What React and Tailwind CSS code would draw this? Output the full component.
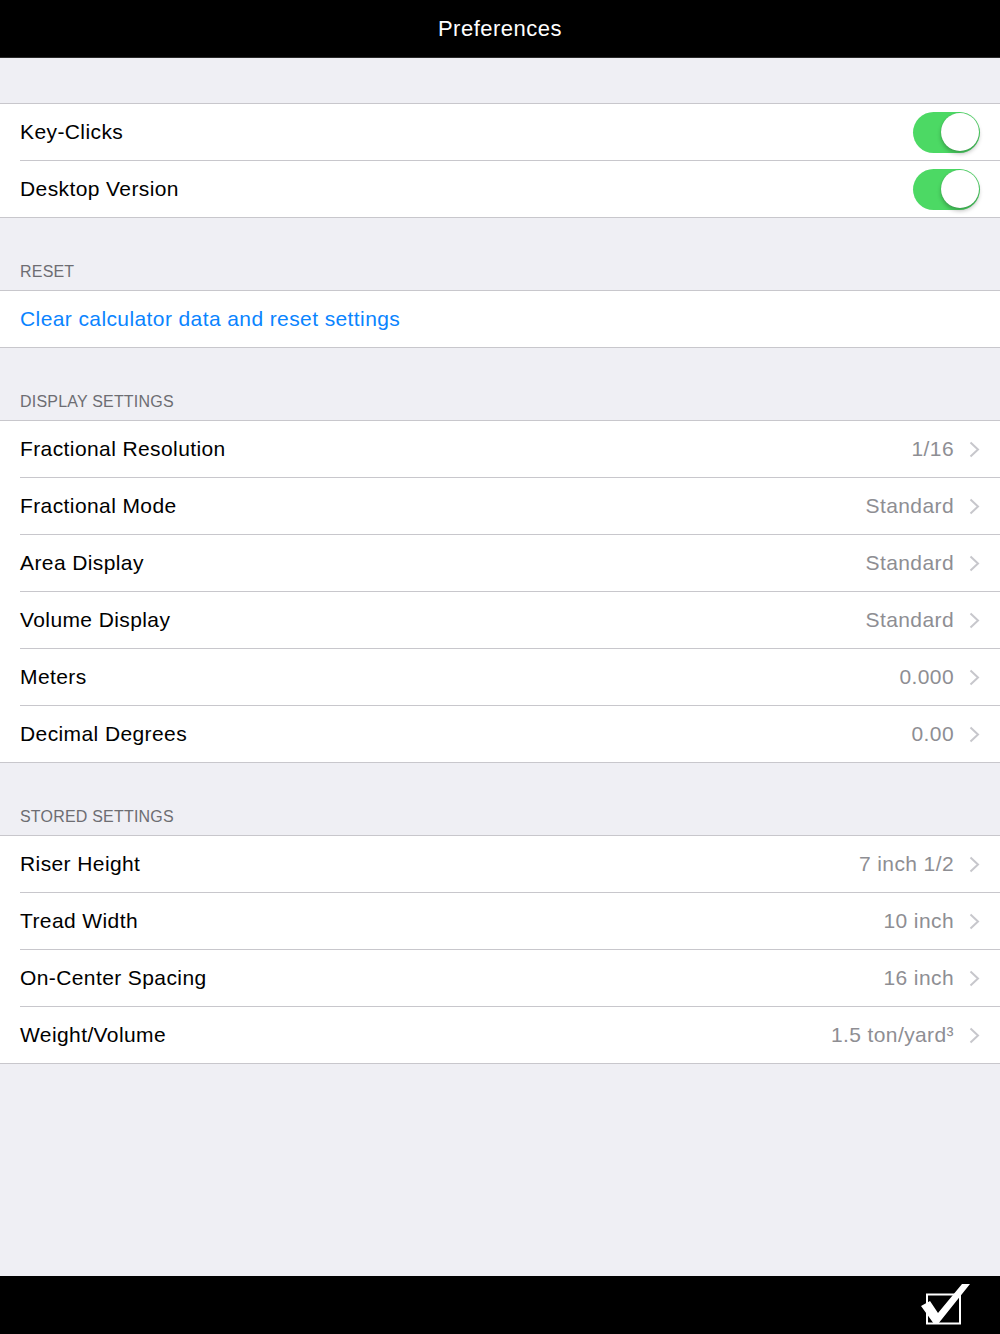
import React, { useState } from 'react';

// iOS-style preferences screen

function Toggle({ on, onChange }) {
  return (
    <button
      type="button"
      onClick={onChange}
      className={`relative w-[67px] h-[41px] rounded-full transition-colors ${on ? 'bg-[#4cd964]' : 'bg-[#e5e5ea]'}`}
    >
      <span
        className={`absolute top-[1.5px] w-[38px] h-[38px] rounded-full bg-white shadow-[0_3px_4px_rgba(0,0,0,0.25),0_0_1px_rgba(0,0,0,0.2)] transition-all ${on ? 'left-[27.5px]' : 'left-[1.5px]'}`}
      />
    </button>
  );
}

function Chevron() {
  return (
    <svg width="11" height="17" viewBox="0 0 11 17" className="shrink-0">
      <path d="M1.5 1.5 L9 8.5 L1.5 15.5" fill="none" stroke="#c7c7cc" strokeWidth="2" />
    </svg>
  );
}

function Row({ label, value, last, children }) {
  return (
    <>
      <div className="h-[56px] flex items-center bg-white pl-5 pr-5">
        <span className="flex-1 text-[21px] tracking-[0.4px] text-black">{label}</span>
        {value !== undefined && (
          <div className="flex items-center gap-[15px]">
            <span className="text-[21px] tracking-[0.4px] text-[#8e8e93]">{value}</span>
            <Chevron />
          </div>
        )}
        {children}
      </div>
      {!last && <div className="ml-5 h-px bg-[#c8c7cc]" />}
    </>
  );
}

function Group({ children }) {
  return <div className="border-t border-b border-[#c8c7cc] bg-white">{children}</div>;
}

function Header({ text }) {
  return (
    <div className="h-[72px] flex items-end px-5 pb-[6px]">
      <span className="text-[16px] uppercase text-[#6d6d72] tracking-[0.2px]">{text}</span>
    </div>
  );
}

export default function App() {
  const [keyClicks, setKeyClicks] = useState(true);
  const [desktop, setDesktop] = useState(true);

  const display = [
    { label: 'Fractional Resolution', value: '1/16' },
    { label: 'Fractional Mode', value: 'Standard' },
    { label: 'Area Display', value: 'Standard' },
    { label: 'Volume Display', value: 'Standard' },
    { label: 'Meters', value: '0.000' },
    { label: 'Decimal Degrees', value: '0.00' },
  ];

  const stored = [
    { label: 'Riser Height', value: '7 inch 1/2' },
    { label: 'Tread Width', value: '10 inch' },
    { label: 'On-Center Spacing', value: '16 inch' },
    { label: 'Weight/Volume', value: '1.5 ton/yard³' },
  ];

  return (
    <div className="min-h-screen flex flex-col bg-[#efeff4] font-['Liberation_Sans',Arial,sans-serif]">
      <div className="h-[58px] shrink-0 bg-black border-b border-[#2a2a2a] flex items-center justify-center">
        <span className="text-white text-[22px] tracking-[0.5px]">Preferences</span>
      </div>

      <div className="h-[45px]" />
      <Group>
        <Row label="Key-Clicks">
          <Toggle on={keyClicks} onChange={() => setKeyClicks(!keyClicks)} />
        </Row>
        <Row label="Desktop Version" last>
          <Toggle on={desktop} onChange={() => setDesktop(!desktop)} />
        </Row>
      </Group>

      <Header text="Reset" />
      <Group>
        <div className="h-[56px] flex items-center px-5">
          <span className="text-[21px] tracking-[0.4px] text-[#0a84ff]">Clear calculator data and reset settings</span>
        </div>
      </Group>

      <Header text="Display Settings" />
      <Group>
        {display.map((r, i) => (
          <Row key={r.label} label={r.label} value={r.value} last={i === display.length - 1} />
        ))}
      </Group>

      <Header text="Stored Settings" />
      <Group>
        {stored.map((r, i) => (
          <Row key={r.label} label={r.label} value={r.value} last={i === stored.length - 1} />
        ))}
      </Group>

      <div className="flex-1" />

      <div className="h-[58px] shrink-0 bg-black flex items-center justify-end pr-[26px]">
        <svg width="56" height="48" viewBox="0 0 56 48">
          <rect x="9" y="13.5" width="33" height="29" fill="none" stroke="white" strokeWidth="2" />
          <polygon points="3,25 12,20 20,32 44,3 52,3 20,43 16,43" fill="white" />
        </svg>
      </div>
    </div>
  );
}
